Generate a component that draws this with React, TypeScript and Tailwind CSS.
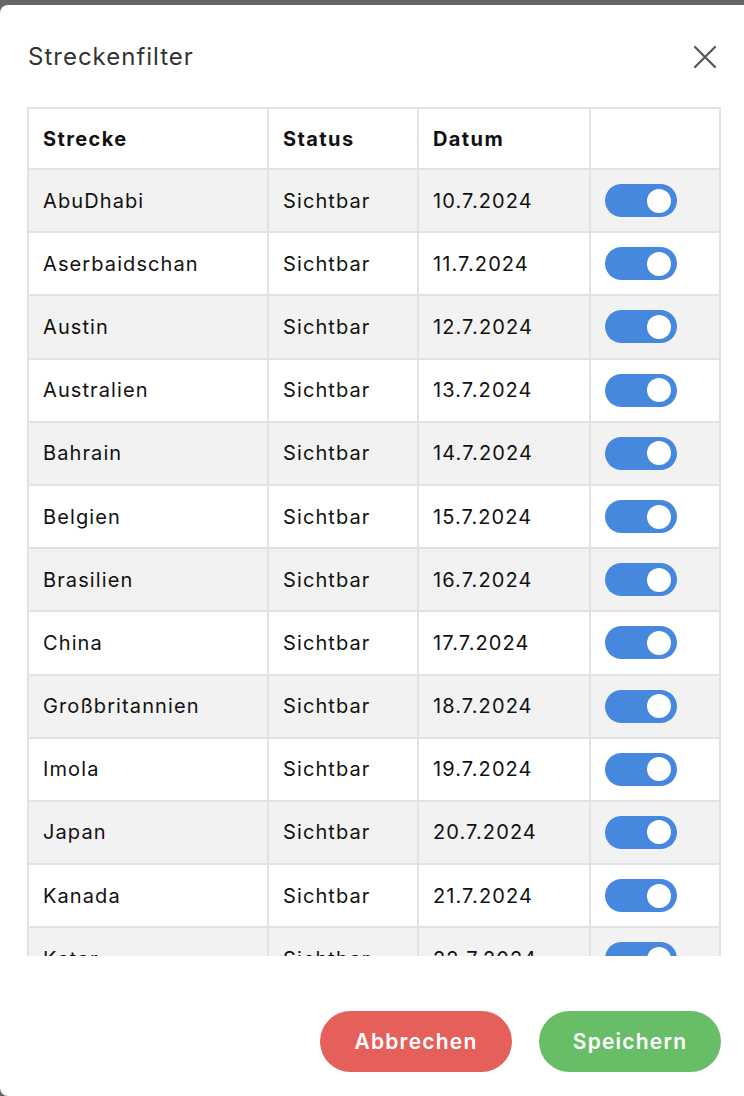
import React from "react";

const rows = [
  ["AbuDhabi", "10.7.2024"],
  ["Aserbaidschan", "11.7.2024"],
  ["Austin", "12.7.2024"],
  ["Australien", "13.7.2024"],
  ["Bahrain", "14.7.2024"],
  ["Belgien", "15.7.2024"],
  ["Brasilien", "16.7.2024"],
  ["China", "17.7.2024"],
  ["Großbritannien", "18.7.2024"],
  ["Imola", "19.7.2024"],
  ["Japan", "20.7.2024"],
  ["Kanada", "21.7.2024"],
  ["Katar", "22.7.2024"],
  ["Las Vegas", "23.7.2024"],
];

function Toggle() {
  return (
    <div className="w-[72px] h-[33px] rounded-full bg-[#4688dd] flex items-center justify-end pr-[6px]">
      <div className="w-[24px] h-[24px] rounded-full bg-white" />
    </div>
  );
}

export default function App() {
  return (
    <div
      className="w-[744px] h-[1096px] bg-[#666666] pt-[5px] overflow-hidden"
      style={{ fontFamily: "Inter, 'Noto Sans', sans-serif" }}
    >
      <div className="h-[1091px] bg-white rounded-l-lg flex flex-col">
        <div className="flex items-center justify-between pl-[28px] pr-[27px] h-[102px] pt-[1px]">
          <h1 className="text-[24px] text-[#333333] font-normal tracking-[1px]">Streckenfilter</h1>
          <svg width="24" height="24" viewBox="0 0 24 24" className="text-[#555]">
            <path d="M2 2 L22 22 M22 2 L2 22" stroke="currentColor" strokeWidth="2.2" strokeLinecap="round" />
          </svg>
        </div>
        <div className="ml-[27px] w-[694px] h-[849px] overflow-hidden">
          <table className="w-[694px] border-collapse text-[20px] text-[#111] tracking-[1.1px]">
            <thead>
              <tr className="h-[61px]">
                <th className="border-2 border-[#dfe2e6] text-left font-bold pl-[14px] w-[240px] tracking-[1.4px]">Strecke</th>
                <th className="border-2 border-[#dfe2e6] text-left font-bold pl-[14px] w-[150px] tracking-[1.4px]">Status</th>
                <th className="border-2 border-[#dfe2e6] text-left font-bold pl-[14px] w-[172px] tracking-[1.4px]">Datum</th>
                <th className="border-2 border-[#dfe2e6]"></th>
              </tr>
            </thead>
            <tbody>
              {rows.map(([name, date], i) => (
                <tr key={name} className={`h-[63.2px] ${i % 2 === 0 ? "bg-[#f2f2f2]" : "bg-white"}`}>
                  <td className="border-2 border-[#dfe2e6] pl-[14px]">{name}</td>
                  <td className="border-2 border-[#dfe2e6] pl-[14px]">Sichtbar</td>
                  <td className="border-2 border-[#dfe2e6] pl-[14px]">{date}</td>
                  <td className="border-2 border-[#dfe2e6] pl-[14px]">
                    <Toggle />
                  </td>
                </tr>
              ))}
            </tbody>
          </table>
        </div>
        <div className="flex justify-end gap-[27px] pr-[23px] pt-[55px]">
          <button className="w-[192px] h-[61px] rounded-full bg-[#e5605a] text-white font-semibold text-[21px] tracking-[1.2px]">
            Abbrechen
          </button>
          <button className="w-[182px] h-[61px] rounded-full bg-[#67be67] text-white font-semibold text-[21px] tracking-[1.2px]">
            Speichern
          </button>
        </div>
      </div>
    </div>
  );
}
